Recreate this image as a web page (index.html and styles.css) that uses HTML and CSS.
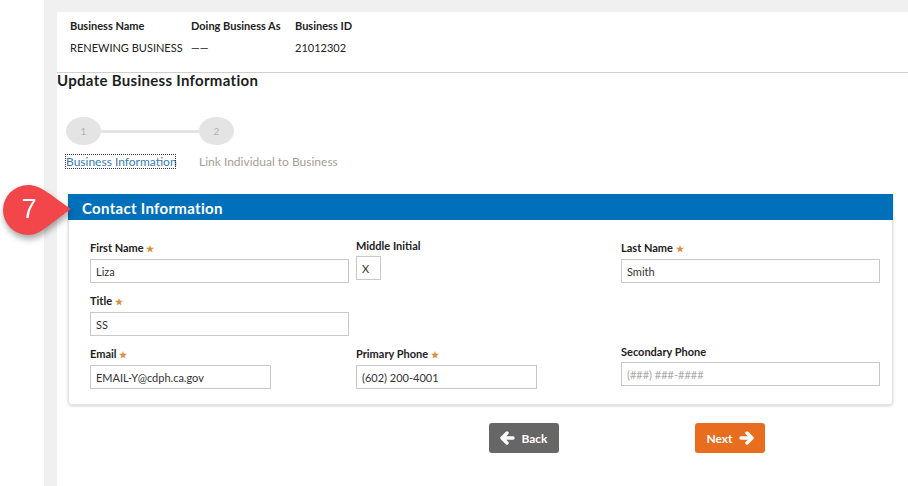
FILE: index.html
```html
<!DOCTYPE html>
<html lang="en">
<head>
    <meta charset="UTF-8">
    <title>Update Business Information</title>
    <link rel="stylesheet" href="styles.css">
</head>
<body>
    <div class="page">
        <div class="gutter"></div>
        <div class="shell">
            <div class="content">
                <!-- Business summary -->
                <section class="biz-info">
                    <div class="biz-col col-name">
                        <div class="biz-label">Business Name</div>
                        <div class="biz-value">RENEWING BUSINESS</div>
                    </div>
                    <div class="biz-col col-dba">
                        <div class="biz-label">Doing Business As</div>
                        <div class="biz-value">——</div>
                    </div>
                    <div class="biz-col">
                        <div class="biz-label">Business ID</div>
                        <div class="biz-value">21012302</div>
                    </div>
                </section>

                <h2 class="page-title">Update Business Information</h2>

                <!-- Stepper -->
                <section class="stepper">
                    <div class="steps">
                        <div class="step-dot">1</div>
                        <div class="step-line"></div>
                        <div class="step-dot">2</div>
                    </div>
                    <div class="step-labels">
                        <span class="step-label active">Business Information</span>
                        <span class="step-label">Link Individual to Business</span>
                    </div>
                </section>

                <!-- Contact card -->
                <section class="card">
                    <div class="badge">
                        <svg width="80" height="62" viewBox="0 0 80 62">
                            <path d="M29 3 C42 3 50 12 72 27 C50 42 42 53 29 53 A25 25 0 0 1 29 3 Z" fill="#f2464b"/>
                        </svg>
                        <span class="badge-num">7</span>
                    </div>
                    <div class="card-head">Contact Information</div>
                    <div class="card-body">
                        <div class="field">
                            <label>First Name <span class="req">★</span></label>
                            <input class="w-lg" type="text" value="Liza">
                        </div>
                        <div class="field up">
                            <label>Middle Initial</label>
                            <input class="w-xs" type="text" value="X">
                        </div>
                        <div class="field">
                            <label>Last Name <span class="req">★</span></label>
                            <input class="w-lg" type="text" value="Smith">
                        </div>

                        <div class="field">
                            <label>Title <span class="req">★</span></label>
                            <input class="w-lg" type="text" value="SS">
                        </div>
                        <div></div>
                        <div></div>

                        <div class="field">
                            <label>Email <span class="req">★</span></label>
                            <input class="w-md" type="text" value="EMAIL-Y@cdph.ca.gov">
                        </div>
                        <div class="field">
                            <label>Primary Phone <span class="req">★</span></label>
                            <input class="w-md" type="text" value="(602) 200-4001">
                        </div>
                        <div class="field up">
                            <label>Secondary Phone</label>
                            <input class="w-lg" type="text" placeholder="(###) ###-####">
                        </div>
                    </div>
                </section>

                <!-- Navigation -->
                <div class="actions">
                    <button class="btn btn-back">
                        <svg width="15" height="14" viewBox="0 0 15 14"><path d="M7 2 L2 7 L7 12 M2.5 7 H13" fill="none" stroke="#fff" stroke-width="3.4" stroke-linecap="round" stroke-linejoin="round"/></svg>
                        Back
                    </button>
                    <button class="btn btn-next">
                        Next
                        <svg width="15" height="14" viewBox="0 0 15 14"><path d="M8 2 L13 7 L8 12 M12.5 7 H2" fill="none" stroke="#fff" stroke-width="3.4" stroke-linecap="round" stroke-linejoin="round"/></svg>
                    </button>
                </div>
            </div>
        </div>
    </div>
</body>
</html>
```
FILE: styles.css
```css
* {
    margin: 0;
    padding: 0;
    box-sizing: border-box;
}

body {
    font-family: Lato, "Noto Sans", sans-serif;
    color: #222;
    background-color: #fff;
    width: 908px;
    height: 486px;
    overflow: hidden;
}

.page {
    display: flex;
    height: 486px;
}

.gutter {
    width: 45px;
    background-color: #fff;
}

.shell {
    flex: 1;
    background-color: #f0f0f0;
    padding: 12px 0 0 13px;
}

.content {
    position: relative;
    background-color: #fff;
    height: 100%;
}

/* Business summary */
.biz-info {
    display: flex;
    height: 61px;
    padding: 7px 0 0 13px;
    border-bottom: 1px solid #cfcfcf;
}

.biz-col {
    display: flex;
    flex-direction: column;
    gap: 8px;
}

.col-name {
    width: 121px;
}

.col-dba {
    width: 104px;
}

.biz-label {
    font-size: 11px;
    font-weight: bold;
    line-height: 14px;
}

.biz-value {
    font-size: 11px;
    line-height: 14px;
}

.page-title {
    font-size: 15px;
    line-height: 14px;
    font-weight: bold;
    letter-spacing: 0.3px;
    margin-top: 0;
    color: #1e1e1e;
}

/* Stepper */
.stepper {
    padding: 30px 0 0 9px;
}

.steps {
    display: flex;
    align-items: center;
}

.step-dot {
    width: 35px;
    height: 28px;
    border-radius: 50%;
    background-color: #e4e4e4;
    color: #b3b3b3;
    font-size: 10px;
    display: flex;
    align-items: center;
    justify-content: center;
}

.step-line {
    width: 98px;
    height: 3px;
    background-color: #e4e4e4;
}

.step-labels {
    display: flex;
    gap: 24px;
    margin-top: 10px;
}

.step-label {
    font-size: 12px;
    line-height: 13px;
    color: #a69e97;
}

.step-label.active {
    color: #3a7db5;
    outline: 1px dotted #333;
    width: 109px;
    white-space: nowrap;
}

/* Contact card */
.card {
    position: relative;
    margin: 26px 15px 0 11px;
    border-radius: 0 0 4px 4px;
    box-shadow: 0 1px 3px rgba(0, 0, 0, 0.18);
}

.badge {
    position: absolute;
    left: -69px;
    top: -12px;
    width: 80px;
    height: 62px;
    filter: drop-shadow(1px 4px 3px rgba(0, 0, 0, 0.35));
}

.badge-num {
    position: absolute;
    left: 20px;
    top: 12px;
    width: 20px;
    text-align: center;
    color: #fff;
    font-family: "Liberation Sans", Arial, sans-serif;
    font-size: 27px;
    line-height: 30px;
}

.card-head {
    height: 26px;
    background-color: #0070ba;
    color: #fff;
    font-size: 15px;
    font-weight: bold;
    letter-spacing: 0.3px;
    line-height: 28px;
    padding-left: 14px;
}

.card-body {
    display: grid;
    grid-template-columns: 266px 265px 1fr;
    row-gap: 11px;
    padding: 21px 12px 15px 21px;
    border: 1px solid #e2e2e2;
    border-top: none;
    border-radius: 0 0 4px 4px;
}

.field {
    display: flex;
    flex-direction: column;
    align-items: flex-start;
}

.field.up {
    margin-top: -2px;
}

.field label {
    font-size: 11px;
    font-weight: bold;
    line-height: 14px;
    margin-bottom: 3px;
    color: #222;
}

.req {
    color: #d9913f;
    font-size: 9px;
}

.field input {
    height: 24px;
    border: 1px solid #c8c8c8;
    padding: 0 5px;
    font-family: Lato, "Noto Sans", sans-serif;
    font-size: 11px;
    color: #333;
}

.field input::placeholder {
    color: #aaa;
}

.w-lg {
    width: 259px;
}

.w-md {
    width: 181px;
}

.w-xs {
    width: 25px;
}

/* Navigation */
.actions {
    display: flex;
    gap: 136px;
    margin: 18px 0 0 432px;
}

.btn {
    width: 70px;
    height: 30px;
    border: none;
    border-radius: 3px;
    color: #fff;
    font-family: Lato, "Noto Sans", sans-serif;
    font-size: 12px;
    font-weight: bold;
    display: flex;
    align-items: center;
    justify-content: center;
    gap: 6px;
}

.btn-back {
    background-color: #666;
}

.btn-next {
    background-color: #e86d1f;
}
```
